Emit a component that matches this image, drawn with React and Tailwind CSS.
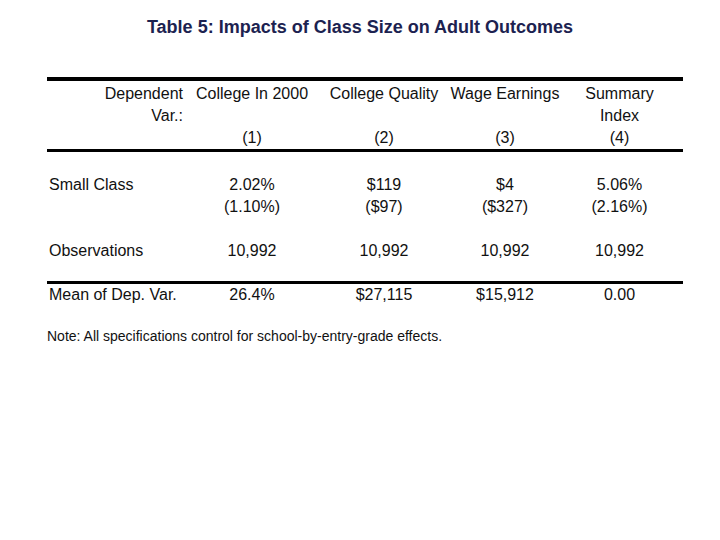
const COLS = 'grid grid-cols-[143px_124px_140px_102px_127px]'

const ROWS = [
  { label: 'Small Class', cells: [['2.02%', '(1.10%)'], ['$119', '($97)'], ['$4', '($327)'], ['5.06%', '(2.16%)']] },
  { label: 'Observations', cells: [['10,992'], ['10,992'], ['10,992'], ['10,992']] },
]

function Cell({ lines }) {
  return (
    <div className="flex flex-col items-center">
      {lines.map((l, i) => (
        <span key={i} className="whitespace-nowrap">{l}</span>
      ))}
    </div>
  )
}

export default function App() {
  return (
    <div className="w-[720px] h-[540px] bg-white text-[#111] font-['Liberation_Sans',Arial,sans-serif] text-[16px] leading-[22px]">
      <div className="pt-[16px] text-center text-[18px] leading-[22px] font-bold text-[#1c2250]">
        Table 5: Impacts of Class Size on Adult Outcomes
      </div>

      <div className="ml-[47px] w-[636px] mt-[39px]">
        <div className="h-[4px] bg-black" />

        {/* Header */}
        <div className={`${COLS} h-[68px] pt-[2px]`}>
          <div className="flex flex-col items-end pr-[7px]">
            <span>Dependent</span>
            <span>Var.:</span>
          </div>
          {['College In 2000', 'College Quality', 'Wage Earnings'].map((h, i) => (
            <div key={h} className="flex flex-col items-center">
              <span className="whitespace-nowrap">{h}</span>
              <span>&nbsp;</span>
              <span>({i + 1})</span>
            </div>
          ))}
          <Cell lines={['Summary', 'Index', '(4)']} />
        </div>

        <div className="h-[3px] bg-black" />

        {/* Body */}
        <div className="pt-[22px] flex flex-col gap-[22px]">
          {ROWS.map((r) => (
            <div key={r.label} className={COLS}>
              <div className="pl-[2px] whitespace-nowrap">{r.label}</div>
              {r.cells.map((c, i) => (
                <Cell key={i} lines={c} />
              ))}
            </div>
          ))}
        </div>

        <div className="h-[3px] bg-black mt-[19px]" />

        <div className={COLS}>
          <div className="pl-[2px] whitespace-nowrap">Mean of Dep. Var.</div>
          <Cell lines={['26.4%']} />
          <Cell lines={['$27,115']} />
          <Cell lines={['$15,912']} />
          <Cell lines={['0.00']} />
        </div>

        <div className="mt-[22px] text-[14px] leading-[16px] whitespace-nowrap">
          Note: All specifications control for school-by-entry-grade effects.
        </div>
      </div>
    </div>
  )
}
